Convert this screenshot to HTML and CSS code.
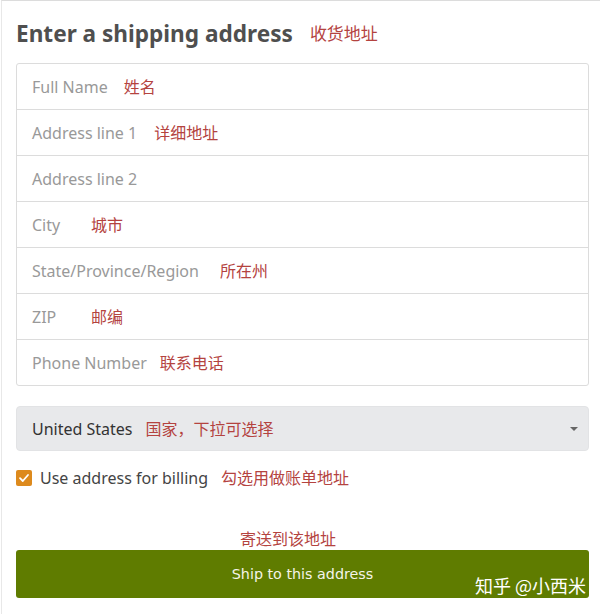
FILE: index.html
```html
<!DOCTYPE html>
<html lang="en">
<head>
<meta charset="utf-8">
<link rel="stylesheet" href="styles.css">
</head>
<body>
<div class="page">
  <h1 class="title">Enter a shipping address <span class="note note-title">收货地址</span></h1>
  <div class="fields">
    <div class="field"><span class="ph">Full Name</span><span class="note note-16">姓名</span></div>
    <div class="field"><span class="ph">Address line 1</span><span class="note note-17">详细地址</span></div>
    <div class="field"><span class="ph">Address line 2</span></div>
    <div class="field"><span class="ph ph-short">City</span><span class="note note-0">城市</span></div>
    <div class="field"><span class="ph">State/Province/Region</span><span class="note note-21">所在州</span></div>
    <div class="field"><span class="ph ph-short">ZIP</span><span class="note note-0">邮编</span></div>
    <div class="field"><span class="ph">Phone Number</span><span class="note">联系电话</span></div>
  </div>
  <div class="select">
    <span class="sel-text">United States</span><span class="note">国家，下拉可选择</span>
    <span class="caret"></span>
  </div>
  <div class="check-row">
    <span class="checkbox">
      <svg width="12" height="12" viewBox="0 0 12 12"><path d="M2 6.2 L4.8 9 L10 3" fill="none" stroke="#fff" stroke-width="1.8" stroke-linecap="round" stroke-linejoin="round"/></svg>
    </span>
    <span class="check-label">Use address for billing</span><span class="note">勾选用做账单地址</span>
  </div>
  <div class="submit-note"><span class="note">寄送到该地址</span></div>
  <div class="button">
    <span class="btn-text">Ship to this address</span>
    <span class="watermark">知乎 @小西米</span>
  </div>
</div>
</body>
</html>
```
FILE: styles.css
```css
html, body {
  margin: 0;
  padding: 0;
  background: #fff;
}
body {
  font-family: "Noto Sans", "Open Sans", "Noto Sans CJK SC", sans-serif;
  width: 600px;
  height: 614px;
  overflow: hidden;
}
.page {
  box-sizing: border-box;
  height: 614px;
  border-top: 1px solid #dcdcdc;
  border-left: 1px solid #e8e8e8;
  margin-left: 1px;
  padding: 18px 11px 0 14px;
}
.title {
  margin: 0;
  font-size: 22.6px;
  font-weight: 700;
  color: #4f4f4f;
  line-height: 30px;
  display: flex;
  align-items: center;
}
.note {
  font-family: "Noto Sans CJK SC", sans-serif;
  font-weight: 400;
  font-size: 16px;
  color: #b4433f;
  margin-left: 13px;
  position: relative;
  top: -1px;
}
.note-title {
  margin-left: 17px;
  font-size: 17px;
}
.note-16 { margin-left: 16px; }
.note-17 { margin-left: 17px; }
.note-21 { margin-left: 21px; }
.note-0 { margin-left: 0; }
.fields {
  margin-top: 14px;
  border: 1px solid #dcdcdc;
  border-radius: 3px;
}
.field {
  height: 45px;
  display: flex;
  align-items: center;
  padding-left: 15px;
  border-top: 1px solid #dcdcdc;
}
.field:first-child {
  border-top: none;
}
.ph {
  font-size: 16px;
  color: #999;
}
.ph-short {
  width: 59px;
}
.select {
  margin-top: 20px;
  height: 45px;
  background: #e8e9eb;
  border: 1px solid #e2e3e5;
  border-radius: 4px;
  display: flex;
  align-items: center;
  padding-left: 15px;
  padding-right: 10px;
  box-sizing: border-box;
}
.sel-text {
  font-size: 16px;
  color: #333;
}
.caret {
  margin-left: auto;
  width: 0;
  height: 0;
  border-left: 4px solid transparent;
  border-right: 4px solid transparent;
  border-top: 4px solid #666;
}
.check-row {
  margin-top: 17px;
  display: flex;
  align-items: center;
  height: 20px;
}
.checkbox {
  width: 16px;
  height: 16px;
  border-radius: 2px;
  background: #dd8a1d;
  display: flex;
  align-items: center;
  justify-content: center;
}
.check-label {
  margin-left: 8px;
  font-size: 16px;
  color: #444;
}
.submit-note {
  margin-top: 40px;
  line-height: 20px;
  height: 20px;
  padding-left: 224px;
}
.submit-note .note {
  margin-left: 0;
  font-size: 16px;
  top: 0;
}
.button {
  position: relative;
  margin-top: 2px;
  height: 48px;
  background: #5f7c00;
  border-radius: 3px;
  display: flex;
  align-items: center;
  justify-content: center;
}
.btn-text {
  font-family: "DejaVu Sans", sans-serif;
  font-size: 14.3px;
  color: #f4f4e8;
}
.watermark {
  position: absolute;
  right: 3px;
  bottom: 0;
  font-family: "Noto Sans CJK SC", sans-serif;
  font-size: 18px;
  color: #fff;
}
```
